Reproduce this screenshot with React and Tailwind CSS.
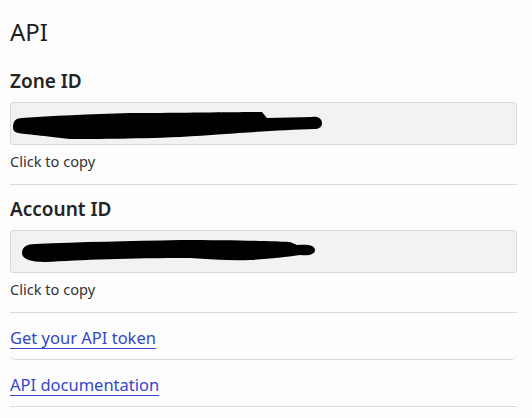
import React from 'react';

const Scribble = ({ d }) => (
    <svg className="absolute inset-0" width="507" height="43" viewBox="0 0 507 43">
        <path d={d} fill="#000" />
    </svg>
);

// redaction marks, in box-local coordinates (box is 507x43)
const zoneMark =
    'M3 25 C3 19 6 16 12 16 C40 14 80 12 120 11 C180 11 220 10 252 10 L257 16 L302 15 C308 14 312 17 312 21 C312 25 309 27 304 27 C270 28 230 31 170 35 C120 37 80 37 60 37 C35 34 15 32 8 31 C4 30 3 28 3 25 Z';
const accountMark =
    'M12 23 C12 17 17 14 25 14 C70 12 120 11 170 10 C220 10 260 11 280 12 L287 15 C298 14 305 15 305 20 C305 24 300 26 290 25 C275 27 260 29 240 30 C220 31 200 29 180 28 C120 28 70 30 35 32 C20 32 12 29 12 23 Z';

const IdField = ({ label, mark, first }) => (
    <div className={`border-b border-[#dcdcdc] pb-[13px] ${first ? 'pt-[21px]' : 'pt-[12px]'}`}>
        <h3 className="text-[19px] leading-[24px] font-semibold text-[#242424]">{label}</h3>
        <div className="relative mt-[9px] h-[43px] rounded-[3px] border border-[#d9d9d9] bg-[#f2f2f2] cursor-pointer">
            <div className="relative -m-px h-[43px]">
                <Scribble d={mark} />
            </div>
        </div>
        <p className="mt-[6px] text-[14.6px] leading-[20px] text-[#333]">Click to copy</p>
    </div>
);

const LinkRow = ({ children, rounded }) => (
    <div className={`border-b border-[#dcdcdc] pt-[13px] pb-[9px] ${rounded ? 'rounded-b-[6px]' : ''}`}>
        <a
            href="#"
            className="text-[16.5px] leading-[24px] text-[#3447c9] underline underline-offset-[4px] decoration-[#3447c9]"
        >
            {children}
        </a>
    </div>
);

export default function App() {
    return (
        <div
            className="min-h-[418px] bg-[#fdfdfd] pl-[10px] pr-[15px] pt-[16px]"
            style={{ fontFamily: '"Noto Sans", "Open Sans", sans-serif' }}
        >
            <h2 className="text-[24px] leading-[32px] font-normal text-[#1e1e1e]">API</h2>
            <IdField label="Zone ID" mark={zoneMark} first />
            <IdField label="Account ID" mark={accountMark} />
            <LinkRow rounded>Get your API token</LinkRow>
            <LinkRow>API documentation</LinkRow>
        </div>
    );
}
